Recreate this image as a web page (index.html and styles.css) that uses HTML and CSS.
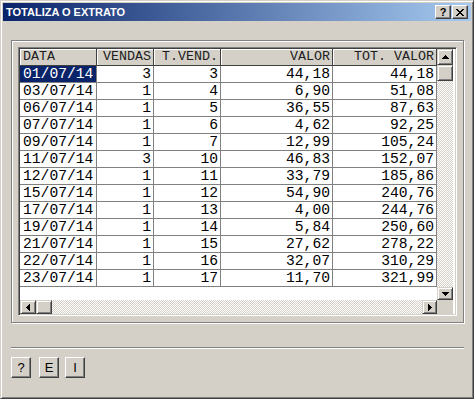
FILE: index.html
```html
<!DOCTYPE html>
<html>
<head>
<meta charset="utf-8">
<link rel="stylesheet" href="styles.css">
</head>
<body>
<div class="window">
  <div class="titlebar">
    <span class="title">TOTALIZA O EXTRATO</span>
    <div class="tbtns">
      <div class="tbtn">?</div>
      <div class="tbtn"><svg width="8" height="7" viewBox="0 0 8 7" shape-rendering="crispEdges"><path d="M0 0h2v1H0zM6 0h2v1H6zM1 1h2v1H1zM5 1h2v1H5zM2 2h4v1H2zM3 3h2v1H3zM2 4h4v1H2zM1 5h2v1H1zM5 5h2v1H5zM0 6h2v1H0zM6 6h2v1H6z" fill="#000"/></svg></div>
    </div>
  </div>
  <div class="client">
    <div class="group">
      <div class="gridbox">
        <div class="gridarea">
          <div class="table">
            <div class="row head">
              <div class="cell left">DATA</div>
              <div class="cell">VENDAS</div>
              <div class="cell">T.VEND.</div>
              <div class="cell">VALOR</div>
              <div class="cell">TOT. VALOR</div>
            </div>
            <div class="row"><div class="cell left sel">01/07/14</div><div class="cell">3</div><div class="cell">3</div><div class="cell">44,18</div><div class="cell">44,18</div></div>
            <div class="row"><div class="cell left">03/07/14</div><div class="cell">1</div><div class="cell">4</div><div class="cell">6,90</div><div class="cell">51,08</div></div>
            <div class="row"><div class="cell left">06/07/14</div><div class="cell">1</div><div class="cell">5</div><div class="cell">36,55</div><div class="cell">87,63</div></div>
            <div class="row"><div class="cell left">07/07/14</div><div class="cell">1</div><div class="cell">6</div><div class="cell">4,62</div><div class="cell">92,25</div></div>
            <div class="row"><div class="cell left">09/07/14</div><div class="cell">1</div><div class="cell">7</div><div class="cell">12,99</div><div class="cell">105,24</div></div>
            <div class="row"><div class="cell left">11/07/14</div><div class="cell">3</div><div class="cell">10</div><div class="cell">46,83</div><div class="cell">152,07</div></div>
            <div class="row"><div class="cell left">12/07/14</div><div class="cell">1</div><div class="cell">11</div><div class="cell">33,79</div><div class="cell">185,86</div></div>
            <div class="row"><div class="cell left">15/07/14</div><div class="cell">1</div><div class="cell">12</div><div class="cell">54,90</div><div class="cell">240,76</div></div>
            <div class="row"><div class="cell left">17/07/14</div><div class="cell">1</div><div class="cell">13</div><div class="cell">4,00</div><div class="cell">244,76</div></div>
            <div class="row"><div class="cell left">19/07/14</div><div class="cell">1</div><div class="cell">14</div><div class="cell">5,84</div><div class="cell">250,60</div></div>
            <div class="row"><div class="cell left">21/07/14</div><div class="cell">1</div><div class="cell">15</div><div class="cell">27,62</div><div class="cell">278,22</div></div>
            <div class="row"><div class="cell left">22/07/14</div><div class="cell">1</div><div class="cell">16</div><div class="cell">32,07</div><div class="cell">310,29</div></div>
            <div class="row"><div class="cell left">23/07/14</div><div class="cell">1</div><div class="cell">17</div><div class="cell">11,70</div><div class="cell">321,99</div></div>
          </div>
          <div class="vscroll">
            <div class="sbtn vbtn"><svg width="7" height="4" viewBox="0 0 7 4" shape-rendering="crispEdges"><path d="M3 0h1v1H3zM2 1h3v1H2zM1 2h5v1H1zM0 3h7v1H0z" fill="#000"/></svg></div>
            <div class="sbtn vthumb"></div>
            <div class="track"></div>
            <div class="sbtn vbtn down"><svg width="7" height="4" viewBox="0 0 7 4" shape-rendering="crispEdges"><path d="M0 0h7v1H0zM1 1h5v1H1zM2 2h3v1H2zM3 3h1v1H3z" fill="#000"/></svg></div>
          </div>
          <div class="hscroll">
            <div class="sbtn hbtn"><svg width="4" height="7" viewBox="0 0 4 7" shape-rendering="crispEdges"><path d="M0 3h1v1H0zM1 2h1v3H1zM2 1h1v5H2zM3 0h1v7H3z" fill="#000"/></svg></div>
            <div class="sbtn hthumb"></div>
            <div class="track"></div>
            <div class="sbtn hbtn right"><svg width="4" height="7" viewBox="0 0 4 7" shape-rendering="crispEdges"><path d="M0 0h1v7H0zM1 1h1v5H1zM2 2h1v3H2zM3 3h1v1H3z" fill="#000"/></svg></div>
          </div>
          <div class="corner"></div>
        </div>
      </div>
    </div>
    <div class="sep"></div>
    <div class="buttons">
      <div class="btn first">?</div>
      <div class="btn">E</div>
      <div class="btn">I</div>
    </div>
  </div>
</div>
</body>
</html>
```
FILE: styles.css
```css
* { box-sizing: border-box; }
html, body { margin: 0; padding: 0; }
body { width: 474px; height: 399px; overflow: hidden; background: #d4d0c8; }

.window {
  width: 474px; height: 399px;
  background: #d4d0c8;
  border: 1px solid;
  border-color: #d4d0c8 #404040 #404040 #d4d0c8;
  box-shadow: inset 1px 1px #fff, inset -1px -1px #808080;
  padding: 2px;
  display: flex; flex-direction: column;
}

.titlebar {
  height: 18px;
  background: linear-gradient(to right, #0a246a, #a6caf0);
  display: flex; align-items: center; justify-content: space-between;
  padding: 0 3px 0 3px;
}
.title { color: #fff; font: bold 11px "Liberation Sans", Arial, sans-serif; }
.tbtns { display: flex; gap: 1px; }
.tbtn {
  width: 16px; height: 14px;
  background: #d4d0c8;
  border: 1px solid; border-color: #fff #404040 #404040 #fff;
  box-shadow: inset -1px -1px #808080;
  display: flex; align-items: center; justify-content: center;
  font: bold 11px "Liberation Sans", Arial, sans-serif; color: #000;
  line-height: 12px;
}

.client { padding: 0 7px 0 8px; display: flex; flex-direction: column; }

.group {
  margin-top: 19px;
  width: 453px;
  border: 1px solid #808080;
  box-shadow: inset 1px 1px #fff, 1px 1px #fff;
  padding: 6px;
}

.gridbox {
  width: 439px;
  border: 1px solid; border-color: #808080 #fff #fff #808080;
  box-shadow: inset 1px 1px #404040, inset -1px -1px #d4d0c8;
  padding: 1px;
}
.gridarea {
  display: grid;
  grid-template-columns: 417px 16px 2px;
  grid-template-rows: 251px 14px;
  background: #fff;
}
.table { grid-column: 1; grid-row: 1; overflow: hidden; }
.row {
  display: grid;
  grid-template-columns: 77px 57px 67px 112px 104px;
  height: 17px;
}
.cell {
  border-right: 1px solid #808080;
  border-bottom: 1px solid #808080;
  padding: 0 2px 0 3px;
  font: 14.67px "Liberation Mono", "Courier New", monospace;
  line-height: 16px;
  color: #000;
  text-align: right;
  white-space: nowrap; overflow: hidden;
}
.cell.left { text-align: left; }
.cell.sel { background: #0a246a; color: #fff; }
.head .cell {
  font-size: 13.33px;
  background: #d4d0c8;
  color: #202020;
  border-right-color: #404040;
  border-bottom-color: #404040;
  box-shadow: inset 1px 1px #fff;
}

.sbtn {
  background: #d4d0c8;
  border: 1px solid; border-color: #d4d0c8 #404040 #404040 #d4d0c8;
  box-shadow: inset 1px 1px #fff, inset -1px -1px #808080;
  display: flex; align-items: center; justify-content: center;
  flex: none;
}
.track {
  flex: 1;
  background: #fff repeating-conic-gradient(#d4d0c8 0 25%, #fff 0 50%) 0 0 / 2px 2px;
}
.vscroll { grid-column: 2; grid-row: 1; display: flex; flex-direction: column; }
.vbtn { height: 16px; }
.vbtn.down { height: 13px; }
.vthumb { height: 16px; }
.hscroll { grid-column: 1; grid-row: 2; display: flex; }
.hbtn { width: 16px; }
.hbtn.right { width: 15px; }
.hthumb { width: 16px; }
.corner { grid-column: 2; grid-row: 2; background: #d4d0c8; }

.sep {
  margin-top: 24px;
  width: 453px; height: 2px;
  border-top: 1px solid #808080;
  border-bottom: 1px solid #fff;
}
.buttons { margin-top: 8px; display: flex; gap: 6px; }
.btn {
  width: 20px; height: 21px;
  background: #d4d0c8;
  border: 1px solid; border-color: #fff #404040 #404040 #fff;
  box-shadow: inset -1px -1px #808080;
  display: flex; align-items: center; justify-content: center;
  font: 13px "Liberation Sans", Arial, sans-serif; color: #000;
}
.btn.first { margin-right: 2px; }
```
